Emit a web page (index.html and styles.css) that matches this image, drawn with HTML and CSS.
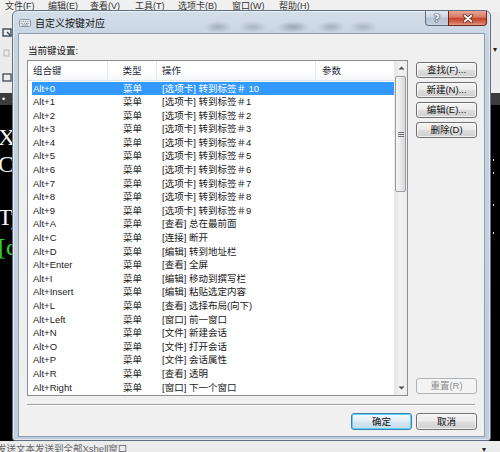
FILE: index.html
```html
<!DOCTYPE html>
<html lang="zh-CN">
<head>
<meta charset="utf-8">
<title>自定义按键对应</title>
<link rel="stylesheet" href="styles.css">
</head>
<body>
<div class="app">
  <div class="menubar">
    <span>文件(F)</span><span>编辑(E)</span><span>查看(V)</span><span>工具(T)</span><span>选项卡(B)</span><span>窗口(W)</span><span>帮助(H)</span>
  </div>
  <div class="toolbar">
    <div class="tb-icons">
      <svg class="tb-icon" width="10" height="10" viewBox="0 0 10 10"><rect x="1" y="1" width="8" height="7" fill="none" stroke="#3a4a5a" stroke-width="1.4"/><path d="M5 4 L9 8" stroke="#3a4a5a" stroke-width="1.4"/></svg>
      <svg class="tb-icon small" width="10" height="8" viewBox="0 0 10 8"><rect x="2" y="1" width="5" height="6" fill="none" stroke="#b8b8b8" stroke-width="1"/></svg>
      <svg class="tb-icon" width="10" height="10" viewBox="0 0 10 10"><rect x="1" y="1" width="8" height="7" fill="none" stroke="#4a5563" stroke-width="1.4"/></svg>
    </div>
    <span class="tb-drop">▾</span>
  </div>
  <div class="tabbar"><span class="tab-dot">•</span><span class="tab-num">1</span></div>
  <div class="terminal">
    <div class="term-text">
      <div class="tline">Xs</div>
      <div class="tline">Co</div>
      <div class="tline">&nbsp;</div>
      <div class="tline">Ty</div>
      <div class="tline green">[c</div>
    </div>
    <div class="term-dots">
      <i class="dot d1"></i><i class="dot d2"></i><i class="dot d3"></i><i class="dot d4"></i>
    </div>
  </div>
  <div class="statusbar"><span>发送文本发送到全部Xshell窗口</span><span class="st-mark">▾</span></div>
</div>

<div class="dialog">
  <div class="titlebar">
    <svg class="title-icon" width="12" height="10" viewBox="0 0 12 10">
      <rect x="0.5" y="1.5" width="11" height="7" rx="1" fill="#e4e8ec" stroke="#8a949e"/>
      <path d="M2 3.5h1M4 3.5h1M6 3.5h1M8 3.5h1.5M2 5.5h1.5M5 5.5h1M7 5.5h2.5M3 7h6" stroke="#8a949e" stroke-width="0.9"/>
    </svg>
    <span class="title">自定义按键对应</span>
    <div class="caption-btns">
      <div class="cap help">?</div>
      <div class="cap close">
        <svg width="12" height="9" viewBox="0 0 12 9"><path d="M2.5 1.5 L9.5 7.5 M9.5 1.5 L2.5 7.5" stroke="#5a1a10" stroke-width="3.2" stroke-linecap="round"/><path d="M2.5 1.5 L9.5 7.5 M9.5 1.5 L2.5 7.5" stroke="#ffffff" stroke-width="1.8" stroke-linecap="round"/></svg>
      </div>
    </div>
  </div>
  <div class="client">
    <div class="caption">当前键设置:</div>
    <div class="main">
      <div class="list">
        <div class="list-body">
          <div class="row header">
            <div class="c1">组合键</div><div class="c2">类型</div><div class="c3">操作</div><div class="c4">参数</div>
          </div>
          <div class="rows">
            <div class="row sel"><div class="c1">Alt+0</div><div class="c2">菜单</div><div class="c3">[选项卡] 转到标签＃ 10</div><div class="c4"></div></div>
            <div class="row"><div class="c1">Alt+1</div><div class="c2">菜单</div><div class="c3">[选项卡] 转到标签＃1</div><div class="c4"></div></div>
            <div class="row"><div class="c1">Alt+2</div><div class="c2">菜单</div><div class="c3">[选项卡] 转到标签＃2</div><div class="c4"></div></div>
            <div class="row"><div class="c1">Alt+3</div><div class="c2">菜单</div><div class="c3">[选项卡] 转到标签＃3</div><div class="c4"></div></div>
            <div class="row"><div class="c1">Alt+4</div><div class="c2">菜单</div><div class="c3">[选项卡] 转到标签＃4</div><div class="c4"></div></div>
            <div class="row"><div class="c1">Alt+5</div><div class="c2">菜单</div><div class="c3">[选项卡] 转到标签＃5</div><div class="c4"></div></div>
            <div class="row"><div class="c1">Alt+6</div><div class="c2">菜单</div><div class="c3">[选项卡] 转到标签＃6</div><div class="c4"></div></div>
            <div class="row"><div class="c1">Alt+7</div><div class="c2">菜单</div><div class="c3">[选项卡] 转到标签＃7</div><div class="c4"></div></div>
            <div class="row"><div class="c1">Alt+8</div><div class="c2">菜单</div><div class="c3">[选项卡] 转到标签＃8</div><div class="c4"></div></div>
            <div class="row"><div class="c1">Alt+9</div><div class="c2">菜单</div><div class="c3">[选项卡] 转到标签＃9</div><div class="c4"></div></div>
            <div class="row"><div class="c1">Alt+A</div><div class="c2">菜单</div><div class="c3">[查看] 总在最前面</div><div class="c4"></div></div>
            <div class="row"><div class="c1">Alt+C</div><div class="c2">菜单</div><div class="c3">[连接] 断开</div><div class="c4"></div></div>
            <div class="row"><div class="c1">Alt+D</div><div class="c2">菜单</div><div class="c3">[编辑] 转到地址栏</div><div class="c4"></div></div>
            <div class="row"><div class="c1">Alt+Enter</div><div class="c2">菜单</div><div class="c3">[查看] 全屏</div><div class="c4"></div></div>
            <div class="row"><div class="c1">Alt+I</div><div class="c2">菜单</div><div class="c3">[编辑] 移动到撰写栏</div><div class="c4"></div></div>
            <div class="row"><div class="c1">Alt+Insert</div><div class="c2">菜单</div><div class="c3">[编辑] 粘贴选定内容</div><div class="c4"></div></div>
            <div class="row"><div class="c1">Alt+L</div><div class="c2">菜单</div><div class="c3">[查看] 选择布局(向下)</div><div class="c4"></div></div>
            <div class="row"><div class="c1">Alt+Left</div><div class="c2">菜单</div><div class="c3">[窗口] 前一窗口</div><div class="c4"></div></div>
            <div class="row"><div class="c1">Alt+N</div><div class="c2">菜单</div><div class="c3">[文件] 新建会话</div><div class="c4"></div></div>
            <div class="row"><div class="c1">Alt+O</div><div class="c2">菜单</div><div class="c3">[文件] 打开会话</div><div class="c4"></div></div>
            <div class="row"><div class="c1">Alt+P</div><div class="c2">菜单</div><div class="c3">[文件] 会话属性</div><div class="c4"></div></div>
            <div class="row"><div class="c1">Alt+R</div><div class="c2">菜单</div><div class="c3">[查看] 透明</div><div class="c4"></div></div>
            <div class="row"><div class="c1">Alt+Right</div><div class="c2">菜单</div><div class="c3">[窗口] 下一个窗口</div><div class="c4"></div></div>
          </div>
        </div>
        <div class="vscroll">
          <div class="arrow">
            <svg width="7" height="4" viewBox="0 0 7 4"><path d="M0.5 3.5 L3.5 0.5 L6.5 3.5 Z" fill="#4d4d4d"/></svg>
          </div>
          <div class="track">
            <div class="thumb"><div class="grip"></div></div>
          </div>
          <div class="arrow">
            <svg width="7" height="4" viewBox="0 0 7 4"><path d="M0.5 0.5 L3.5 3.5 L6.5 0.5 Z" fill="#4d4d4d"/></svg>
          </div>
        </div>
      </div>
      <div class="side">
        <div class="side-top">
          <button class="btn">查找(F)...</button>
          <button class="btn">新建(N)...</button>
          <button class="btn">编辑(E)...</button>
          <button class="btn">删除(D)</button>
        </div>
        <button class="btn" disabled>重置(R)</button>
      </div>
    </div>
    <div class="sep"></div>
    <div class="footer">
      <button class="btn default">确定</button>
      <button class="btn">取消</button>
    </div>
  </div>
</div>
</body>
</html>
```
FILE: styles.css
```css
* { box-sizing: border-box; margin: 0; padding: 0; }
html, body { width: 500px; height: 452px; overflow: hidden; }
body {
  font-family: "Liberation Sans", "Noto Sans CJK SC", sans-serif;
  font-size: 9.5px;
  color: #111;
  background: #000;
  position: relative;
}

/* ---------- background application ---------- */
.app { width: 500px; height: 452px; display: flex; flex-direction: column; }
.menubar {
  height: 12px;
  background: #f0f0f0;
  display: grid;
  grid-template-columns: 43px 42px 45px 43px 54px 47px auto;
  padding-left: 5px;
  font-size: 9px;
  line-height: 13px;
  color: #333;
  white-space: nowrap;
}
.toolbar {
  height: 81px;
  background: #ececec;
  display: flex;
  justify-content: space-between;
  align-items: flex-start;
}
.tb-icons { display: flex; flex-direction: column; padding: 16px 0 0 2px; }
.tb-icon { display: block; }
.tb-icon + .tb-icon { margin-top: 11px; }
.tb-icon.small + .tb-icon { margin-top: 16px; }
.tb-drop { font-size: 8px; color: #222; padding: 33px 3px 0 0; line-height: 10px; }
.tabbar {
  height: 12px;
  background: #3b3b3b;
  color: #fff;
  display: flex;
  gap: 6px;
  padding-left: 2px;
  font-size: 9px;
  line-height: 12px;
}
.terminal {
  flex: 1;
  background: #000;
  display: flex;
  justify-content: space-between;
  overflow: hidden;
}
.term-text {
  color: #f4f4f4;
  font-family: "Liberation Serif", serif;
  font-size: 24px;
  line-height: 26.5px;
  padding: 19px 0 0 0;
  margin-left: -2px;
  white-space: nowrap;
}
.tline.green { color: #2fd02f; margin-top: 4px; }
.term-dots { width: 10px; display: flex; flex-direction: column; padding-top: 54px; }
.dot { display: block; width: 1px; height: 2px; background: #ddd; margin-left: 3px; }
.d2 { margin-top: 11px; }
.d3 { margin-top: 30px; }
.d4 { margin-top: 26px; }

.statusbar {
  height: 11px;
  background: #ececec;
  color: #666;
  font-size: 9.5px;
  line-height: 16px;
  display: flex;
  justify-content: space-between;
  padding: 0 14px 0 0;
  margin-left: -3px;
  overflow: hidden;
  white-space: nowrap;
}
.st-mark { font-size: 8px; color: #222; line-height: 18px; }

/* ---------- dialog window ---------- */
.dialog {
  position: absolute;
  left: 12px;
  top: 10px;
  width: 479px;
  height: 431px;
  border: 1px solid #5f6f80;
  border-radius: 6px 6px 3px 3px;
  background:
    radial-gradient(ellipse 14px 6px at 205px 16px, rgba(90,100,115,.35), transparent),
    radial-gradient(ellipse 14px 6px at 240px 16px, rgba(90,100,115,.3), transparent),
    radial-gradient(ellipse 16px 6px at 280px 16px, rgba(80,90,105,.4), transparent),
    radial-gradient(ellipse 14px 6px at 318px 16px, rgba(90,100,115,.35), transparent),
    radial-gradient(ellipse 14px 6px at 350px 16px, rgba(90,100,115,.3), transparent),
    linear-gradient(to bottom, #d4dee9 0, #c6d3e1 30px, #bfcddc 100%);
  padding: 0 5px 3px 5px;
  display: flex;
  flex-direction: column;
  box-shadow: inset 0 0 0 1px rgba(255,255,255,.55);
}
.titlebar {
  height: 22px;
  display: flex;
  align-items: flex-start;
  margin: 0 -2px 0 0;
}
.title-icon { margin-top: 7px; margin-left: 1px; }
.title {
  font-family: "Noto Sans CJK SC", sans-serif;
  font-size: 10px;
  line-height: 12px;
  margin-top: 6px;
  margin-left: 4px;
  color: #111;
}
.caption-btns { margin-left: auto; display: flex; }
.cap {
  height: 15px;
  display: flex;
  align-items: center;
  justify-content: center;
  border: 1px solid #5e6d7d;
  border-top: none;
}
.help {
  width: 23px;
  border-radius: 0 0 0 4px;
  border-right: none;
  background: linear-gradient(to bottom, #e3e9f0 0, #c9d4e0 45%, #b3c1d1 50%, #c6d2df 100%);
  color: #fff;
  font-family: "DejaVu Sans", sans-serif;
  font-weight: bold;
  font-size: 10px;
  text-shadow: 0 0 1px #334, 0 0 1px #334, 0 0 2px #556;
}
.close {
  width: 39px;
  border-radius: 0 0 4px 0;
  border-color: #6e2418;
  background: linear-gradient(to bottom, #e9a898 0, #d8765f 45%, #c6452c 52%, #d4654c 80%, #e39c86 100%);
}

.client {
  flex: 1;
  background: #f0f0f0;
  border: 1px solid #8e9fb2;
  display: flex;
  flex-direction: column;
  padding: 10px 7px 0 8px;
}
.caption { padding-left: 1px; line-height: 14px; height: 16px; color: #111; }

.main { display: flex; gap: 8px; height: 336px; }
.list {
  width: 381px;
  border: 1px solid #8a8f96;
  background: #fff;
  display: flex;
}
.list-body { flex: 1; overflow: hidden; }
.rows { display: grid; grid-auto-rows: 13.6px; padding-top: 0.5px; }
.row {
  display: grid;
  grid-template-columns: 80px 49px 159px 1fr;
  height: 13.6px;
  line-height: 13.6px;
  white-space: nowrap;
  color: #1a1a1a;
}
.row > div { overflow: hidden; }
.row .c1 { padding-left: 5px; }
.row .c2 { text-align: center; }
.row .c3 { padding-left: 5px; }
.row .c4 { padding-left: 6px; }
.row.header {
  height: 20px;
  line-height: 20px;
  background: linear-gradient(to bottom, #ffffff 0, #ffffff 50%, #f6f7f9 100%);
  border-bottom: 1px solid #e2e4e7;
  color: #1e2a38;
}
.row.header > div { border-right: 1px solid #e4e6e9; }
.row.header > div:last-child { border-right: none; }
.row.sel {
  background: linear-gradient(to right, transparent 4px, #3399ff 4px);
  color: #fff;
}

.vscroll {
  width: 13px;
  background: linear-gradient(to right, #e6e6e6, #f2f2f2 40%, #ececec);
  border-left: 1px solid #e9e9e9;
  display: flex;
  flex-direction: column;
}
.arrow { height: 14px; display: flex; align-items: center; justify-content: center; }
.track { flex: 1; padding-top: 1px; }
.thumb {
  height: 116px;
  margin: 0 1px 0 0;
  border: 1px solid #999da3;
  border-radius: 2px;
  background: linear-gradient(to right, #f6f6f6, #e9e9e9 50%, #d8d8d8);
  display: flex;
  align-items: center;
  justify-content: center;
}
.grip {
  width: 6px;
  height: 5px;
  background: repeating-linear-gradient(to bottom, #6b6f75 0, #6b6f75 1px, transparent 1px, transparent 2px);
}

.side { width: 61px; display: flex; flex-direction: column; justify-content: space-between; padding: 2px 0 2px 0; }
.side-top { display: flex; flex-direction: column; gap: 4px; }

.btn {
  font-family: "Liberation Sans", "Noto Sans CJK SC", sans-serif;
  font-size: 9.5px;
  height: 16px;
  width: 61px;
  line-height: 14px;
  color: #111;
  border: 1px solid #707070;
  border-radius: 3px;
  background: linear-gradient(to bottom, #f3f3f3 0, #ebebeb 48%, #dddddd 52%, #cfcfcf 100%);
  box-shadow: inset 0 0 0 1px rgba(255,255,255,.7);
  padding: 0;
}
.btn:disabled {
  color: #8d8d8d;
  border-color: #adb2b5;
  background: #f4f4f4;
  box-shadow: none;
}
.btn.default {
  border-color: #3c7fb1;
  box-shadow: inset 0 0 0 1px #5fd2f9;
  background: linear-gradient(to bottom, #f1f7fb 0, #e6eff6 48%, #d7e6f1 52%, #c7dbeb 100%);
}

.sep {
  margin-top: 8px;
  height: 2px;
  border-top: 1px solid #a0a0a0;
  border-bottom: 1px solid #ffffff;
  margin-right: 2px;
}
.footer { display: flex; justify-content: flex-end; gap: 4px; margin-top: 7px; }
.footer .btn { height: 17px; }
```
